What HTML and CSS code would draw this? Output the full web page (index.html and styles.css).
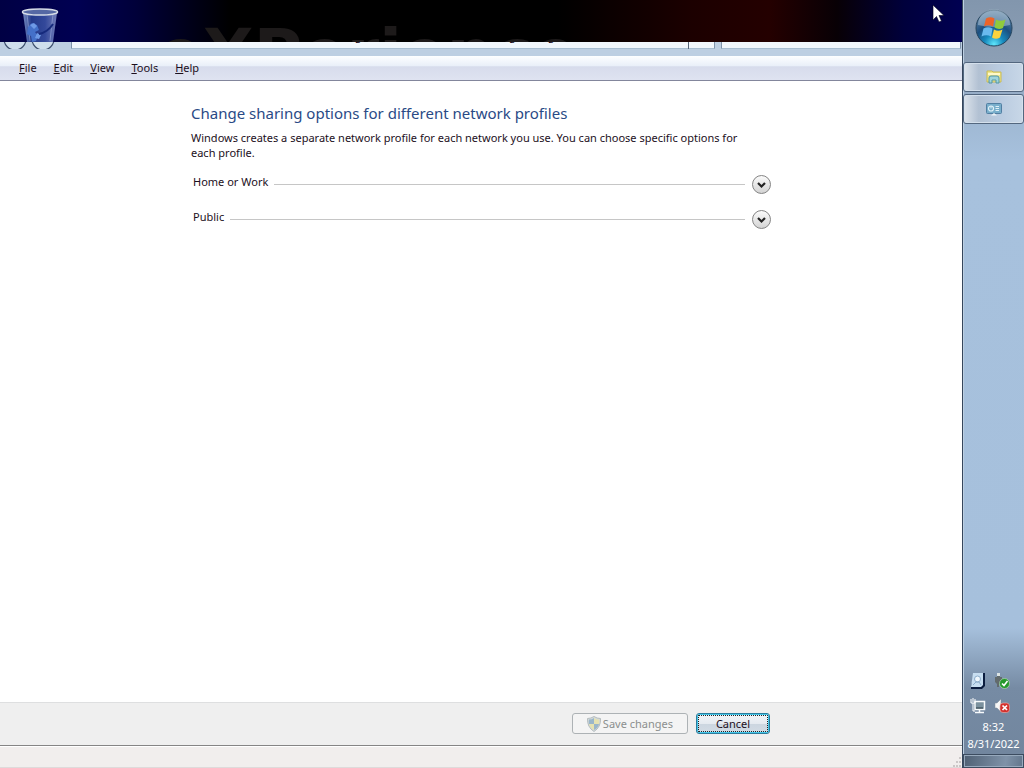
FILE: index.html
```html
<!DOCTYPE html>
<html lang="en">
<head>
  <meta charset="UTF-8">
  <meta name="viewport" content="width=device-width, initial-scale=1.0">
  <title>Advanced sharing settings</title>
  <link rel="stylesheet" href="styles.css">
</head>
<body>
  <div class="screen">
    <!-- Desktop strip -->
    <div class="desktop">
      <span class="wallpaper-text">eXPerience</span>
      <svg class="recycle-bin" width="40" height="42" viewBox="0 0 40 42">
        <defs>
          <linearGradient id="bin" x1="0" y1="0" x2="1" y2="0">
            <stop offset="0" stop-color="#8ba3d6"/>
            <stop offset=".25" stop-color="#2a4496"/>
            <stop offset=".65" stop-color="#3c55a8"/>
            <stop offset="1" stop-color="#8794cc"/>
          </linearGradient>
        </defs>
        <path d="M3 13 L7 42 H33 L37 13 Z" fill="url(#bin)" opacity=".85"/>
        <path d="M7 14 L10 41 M33 14 L30 41" stroke="#a9b8e2" stroke-width="1" opacity=".5"/>
        <path d="M8 27 l4 -4 5 2 2 5 -4 2 3 4 -2 5 -4 1 -1 -6 -4 -2 Z" fill="#4470c9"/>
        <path d="M10 25 l4 -2 3 3 -3 3 Z M17 33 l4 2 -2 4 -4 -1 Z" fill="#6f9ae6"/>
        <path d="M19 34 Q28 32 33 24" fill="none" stroke="#162a7c" stroke-width="2"/>
        <ellipse cx="20" cy="12" rx="17.500" ry="3" fill="#5568a4" stroke="#d5dbe6" stroke-width="1.500"/>
      </svg>
      <svg class="cursor" width="13" height="20" viewBox="0 0 13 20">
        <path d="M1 1 V16 L4.500 12.500 L7 18 L9.500 17 L7 11.500 H12 Z" fill="#fff" stroke="#00001c" stroke-width=".6"/>
      </svg>
    </div>

    <!-- Window -->
    <main class="window">
      <div class="address-row">
        <svg class="nav-buttons" width="58" height="24" viewBox="0 0 58 24">
          <g fill="#cfdfed" stroke="#3e506e" stroke-width="1.200">
            <circle cx="15" cy="14" r="11"/>
            <circle cx="43" cy="14" r="11"/>
          </g>
        </svg>
        <div class="address">
          <svg width="10" height="16" viewBox="0 0 10 16"><circle cx="5" cy="11" r="4" fill="#30479c"/></svg>
          <span>Network and Internet</span>
          <span>Network and Sharing Center</span>
          <span>Advanced sharing settings</span>
          <div class="address-drop">
            <svg width="8" height="16" viewBox="0 0 8 16"><path d="M1 9 L4 13 L7 9" fill="none" stroke="#333c4c" stroke-width="1.500"/></svg>
          </div>
        </div>
        <div class="search">
          <svg width="10" height="16" viewBox="0 0 10 16"><path d="M2 14 L7 10" stroke="#35488c" stroke-width="2"/></svg>
        </div>
      </div>

      <nav class="menu-bar">
        <button><u>F</u>ile</button>
        <button><u>E</u>dit</button>
        <button><u>V</u>iew</button>
        <button><u>T</u>ools</button>
        <button><u>H</u>elp</button>
      </nav>

      <section class="content">
        <div class="column">
          <h1>Change sharing options for different network profiles</h1>
          <p>Windows creates a separate network profile for each network you use. You can choose specific options for each profile.</p>
          <button class="profile">
            <span class="profile-name">Home or Work</span>
            <span class="rule"></span>
            <svg width="20" height="20" viewBox="0 0 20 20">
              <circle cx="10.500" cy="10.500" r="9" fill="url(#knob)" stroke="#858585"/>
              <path d="M7 9 L10.500 12.500 L14 9" fill="none" stroke="#222" stroke-width="2.200"/>
            </svg>
          </button>
          <button class="profile">
            <span class="profile-name">Public</span>
            <span class="rule"></span>
            <svg width="20" height="20" viewBox="0 0 20 20">
              <defs>
                <linearGradient id="knob" x1="0" y1="0" x2="0" y2="1">
                  <stop offset="0" stop-color="#fcfcfc"/>
                  <stop offset="1" stop-color="#d2d2d2"/>
                </linearGradient>
              </defs>
              <circle cx="10.500" cy="10.500" r="9" fill="url(#knob)" stroke="#858585"/>
              <path d="M7 9 L10.500 12.500 L14 9" fill="none" stroke="#222" stroke-width="2.200"/>
            </svg>
          </button>
        </div>
      </section>

      <footer class="actions">
        <div class="column">
          <button class="btn" disabled>
            <svg width="14" height="16" viewBox="0 0 14 16">
              <path d="M7 0.500 Q10 2.500 13.500 2.500 Q14 11 7 15.500 Q0 11 0.500 2.500 Q4 2.500 7 0.500 Z" fill="#d5dbdc" stroke="#b4bcbe"/>
              <path d="M7 2 V8 H2 Q1.500 6 2 3.500 Q5 3.500 7 2 Z M7 8 H12 Q11 12 7 14 Z" fill="#9ab6ca"/>
              <path d="M7 2 Q9 3.500 12 3.500 Q12.500 6 12 8 H7 Z M2 8 H7 V14 Q3 12 2 8 Z" fill="#e5e2b2"/>
            </svg>
            Save changes
          </button>
          <button class="btn btn-default">Cancel</button>
        </div>
      </footer>

      <div class="status-bar">
        <svg width="10" height="10" viewBox="0 0 10 10" fill="#cbc7c7">
          <path d="M7 0h2v2h-2z M4 4h2v2h-2z M7 4h2v2h-2z M1 8h2v2h-2z M4 8h2v2h-2z M7 8h2v2h-2z"/>
        </svg>
      </div>
    </main>
  </div>

  <!-- Taskbar -->
  <aside class="taskbar">
    <button class="start" aria-label="Start">
      <svg width="40" height="40" viewBox="0 0 40 40">
        <defs>
          <radialGradient id="orb" cx=".5" cy=".95" r=".9">
            <stop offset="0" stop-color="#5fe6fb"/>
            <stop offset=".3" stop-color="#1689bd"/>
            <stop offset=".6" stop-color="#1c4f80"/>
            <stop offset="1" stop-color="#6688a6"/>
          </radialGradient>
        </defs>
        <circle cx="20" cy="20" r="18" fill="url(#orb)" stroke="#27465f"/>
        <path d="M4 17 A16 16 0 0 1 36 17 Q20 21 4 17 Z" fill="#c4d5e3" opacity=".45"/>
        <path d="M12 10.500 Q16 8 20.500 10.500 L19 18.500 Q14.500 16 10 18.500 Z" fill="#ed6327"/>
        <path d="M22 11.500 Q26.500 14 31.500 11.500 L29 20 Q24.500 22 20.500 19.500 Z" fill="#8fca3c"/>
        <path d="M9.500 20.500 Q14 18 18.500 20.500 L17 28.500 Q12.500 26 7.500 28.500 Z" fill="#69b9ee"/>
        <path d="M20 21.500 Q24 24 28.500 21.500 L26 29.500 Q22 32 18 29.500 Z" fill="#fcd23c"/>
      </svg>
    </button>
    <button class="task" aria-label="Windows Explorer">
      <svg width="16" height="16" viewBox="0 0 16 16">
        <path d="M1 2 H6 L7 3 H15 V13 H1 Z" fill="#efe68b" stroke="#c9bb55"/>
        <path d="M2 5 H14" stroke="#fff9c8" stroke-width="2"/>
        <path d="M3 14 V9 Q3 7 5 7 H11 Q13 7 13 9 V14 H10 V11 H6 V14 Z" fill="#9fd5dc" stroke="#5296a5"/>
      </svg>
    </button>
    <button class="task" aria-label="Control Panel">
      <svg width="16" height="16" viewBox="0 0 16 16">
        <rect x="0.500" y="2.500" width="15" height="10" rx="1" fill="#78aecb" stroke="#527fa2"/>
        <circle cx="5" cy="7.500" r="2.500" fill="none" stroke="#e0f1f8" stroke-width="1.200"/>
        <path d="M5 7.500 V5 M9.500 5.500 H13 M9.500 7.500 H13 M9.500 9.500 H13" stroke="#e0f1f8"/>
        <path d="M5 14.500 L8 12 L11 14.500 Z" fill="#edf3f7"/>
      </svg>
    </button>

    <div class="tray">
      <div class="tray-icons">
        <svg width="16" height="16" viewBox="0 0 16 16">
          <path d="M4 0 H15 V13 L12 16 H1 V14 Z" fill="#0b1d3f"/>
          <path d="M3 0 H13 V12 L11 14 H1 Z" fill="#c7def1"/>
          <circle cx="7.500" cy="6" r="3" fill="#eff7fd" stroke="#8cadcb"/>
          <path d="M3 12 L6 9 H9 L11 12" fill="none" stroke="#8cadcb"/>
        </svg>
        <svg width="16" height="16" viewBox="0 0 16 16">
          <path d="M3 0 H6 V4 H8 V8 Q8 11 5 11 V14 H3 V11 L1 9 V4 H3 Z" fill="#626b6d"/>
          <path d="M3 0 H6 V3 H3 Z" fill="#dce4e4"/>
          <circle cx="10.500" cy="10.500" r="5" fill="#24992c" stroke="#c3e3bc" stroke-width=".6"/>
          <path d="M8 10.500 L10 12.500 L13.500 8" fill="none" stroke="#fff" stroke-width="1.600"/>
        </svg>
        <svg width="16" height="16" viewBox="0 0 16 16">
          <path d="M5 3.500 H14.500 V11.500 H5 Z" fill="#7b919e" stroke="#f7fafc" stroke-width="1.500"/>
          <path d="M5 14.500 H14 M9.500 12 V14" stroke="#f7fafc" stroke-width="1.500"/>
          <path d="M1 1 V5 H5 V1 M3 0 V4 M3 5 V13 H5" fill="none" stroke="#fff"/>
          <path d="M6 10 H13" stroke="#2c3c47" stroke-width="1"/>
        </svg>
        <svg width="16" height="16" viewBox="0 0 16 16">
          <path d="M1 5 H3 L7 1 V14 L3 10 H1 Z" fill="#f7f7f7" stroke="#7f8b95" stroke-width=".5"/>
          <rect x="6" y="5" width="9.500" height="9.500" rx="3" fill="#d3302d" stroke="#efb3ad" stroke-width=".6"/>
          <path d="M8.500 7.500 L13 12 M13 7.500 L8.500 12" stroke="#fff" stroke-width="1.700"/>
        </svg>
      </div>
      <div class="clock">
        <time>8:32</time>
        <time>8/31/2022</time>
      </div>
      <button class="show-desktop" aria-label="Show desktop"></button>
    </div>
  </aside>
</body>
</html>
```
FILE: styles.css
```css
* {
  box-sizing: border-box;
}
body {
  margin: 0;
  min-height: 100vh;
  display: flex;
  font-family: "Noto Sans", "Open Sans", sans-serif;
  font-size: 11px;
  line-height: 15px;
  color: #1c0f1c;
}
button {
  font: inherit;
  color: inherit;
  border: none;
  background: none;
  padding: 0;
}
svg {
  flex: none;
  display: block;
}
.screen {
  flex: 1;
  min-width: 0;
  display: flex;
  flex-direction: column;
}

/* Desktop */
.desktop {
  position: relative;
  height: 42px;
  flex: none;
  overflow: hidden;
  background: linear-gradient(to right, #000044 0%, #000052 8%, #00003a 14%, #000 24%, #000 58%, #1c0000 72%, #240000 80%, #080005 87%, #00003c 94%, #000052 100%);
}
.wallpaper-text {
  position: absolute;
  left: 158px;
  top: 14px;
  font: bold 66px/80px "DejaVu Sans", sans-serif;
  color: #1d1a1a;
}
.recycle-bin {
  position: absolute;
  left: 20px;
  top: 0;
}
.cursor {
  position: absolute;
  right: 17px;
  top: 4px;
}

/* Window */
.window {
  flex: 1;
  display: flex;
  flex-direction: column;
  background: #fff;
}
.address-row {
  height: 14px;
  flex: none;
  overflow: hidden;
  display: flex;
  align-items: flex-end;
  gap: 6px;
  padding: 0 1px 7px 0;
  background: #bdcfe2;
}
.nav-buttons {
  margin-right: 7px;
}
.address,
.search {
  height: 22px;
  display: flex;
  align-items: center;
  background: #f1f7fc;
  border: 1px solid #7e93aa;
  border-bottom-color: #a6bdd1;
}
.address {
  flex: 1;
  gap: 24px;
  padding: 0 0 6px 10px;
  white-space: nowrap;
}
.address-drop {
  width: 26px;
  height: 22px;
  margin: 0 0 -6px auto;
  display: flex;
  align-items: center;
  justify-content: center;
  padding-bottom: 6px;
  border-left: 1px solid #56657a;
}
.search {
  width: 25%;
  justify-content: flex-end;
  padding: 0 12px 6px 0;
}
.menu-bar {
  height: 25px;
  flex: none;
  display: flex;
  align-items: center;
  gap: 17px;
  padding: 0 0 2px 19px;
  background: linear-gradient(#fdfeff, #eaf0f9 40%, #d7dcec 45%, #dfe3f1);
  border-bottom: 1px solid #83869c;
}
.content {
  flex: 1;
  padding-top: 22px;
}
.column {
  width: 100%;
  max-width: 580px;
  margin: 0 auto;
}
h1 {
  margin: 0 0 7px;
  font-size: 15px;
  font-weight: normal;
  line-height: 20px;
  color: #2a4a86;
}
p {
  max-width: 565px;
  margin: 0 0 14px;
}
.profile {
  width: 100%;
  height: 20px;
  margin-bottom: 15px;
  padding-left: 2px;
  display: flex;
  align-items: center;
  gap: 6px;
}
.profile-name {
  align-self: flex-start;
}
.rule {
  flex: 1;
  height: 1px;
  background: #c6c6c6;
}
.actions {
  padding: 10px 0 11px;
  background: #efefef;
  border-top: 1px solid #dedfe0;
  border-bottom: 1px solid #858585;
}
.actions .column {
  display: flex;
  justify-content: flex-end;
  gap: 8px;
  padding-right: 1px;
}
.btn {
  height: 21px;
  min-width: 74px;
  padding: 0 14px;
  display: flex;
  align-items: center;
  justify-content: center;
  gap: 2px;
  border: 1px solid #707070;
  border-radius: 3px;
}
.btn:disabled {
  color: #8b8f8e;
  background: #f4f4f4;
  border-color: #adb2b5;
}
.btn-default {
  border-color: #2c7c9c;
  box-shadow: inset 0 0 0 1px #45c7ea;
  background: linear-gradient(#f3f6f9, #e5eaf0 50%, #ccd6e0 55%, #d3dce5);
  outline: 1px dotted #222;
  outline-offset: -3px;
}
.status-bar {
  height: 22px;
  display: flex;
  align-items: flex-end;
  justify-content: flex-end;
  background: #f1eeed;
  border-top: 1px solid #fff;
  border-bottom: 1px solid #dedada;
}

/* Taskbar */
.taskbar {
  width: 62px;
  flex: none;
  display: flex;
  flex-direction: column;
  background: linear-gradient(#8296ad 0, #8c9fb5 60px, #9db6d1 110px, #a7c1dd 160px, #a6c0dc calc(100% - 140px), #768ba4 calc(100% - 80px), #71859d 100%);
  border-left: 1px solid #35465c;
  box-shadow: inset 1px 0 #bdd0e2;
}
.start {
  height: 62px;
  padding-bottom: 6px;
  display: flex;
  align-items: center;
  justify-content: center;
}
.task {
  height: 30px;
  margin-bottom: 2px;
  display: flex;
  align-items: center;
  justify-content: center;
  border: 1px solid #53677f;
  border-radius: 3px;
  box-shadow: inset 0 0 0 1px #d4e0ec;
  background: linear-gradient(to right, #dce3eb, #b2c1d3 25%, #b9cbe0 60%, #c8d7e7);
}
.tray {
  margin-top: auto;
  color: #fff;
}
.tray-icons {
  display: grid;
  grid-template-columns: 16px 16px;
  gap: 9px 8px;
  justify-content: center;
  padding-right: 8px;
}
.clock {
  display: flex;
  flex-direction: column;
  align-items: center;
  gap: 2px;
  padding: 5px 0 3px;
}
.show-desktop {
  display: block;
  width: 100%;
  height: 14px;
  border: 1px solid #3c4c60;
  background: linear-gradient(100deg, #4f6074, #7f92a8 70%, #62758b);
  box-shadow: inset 0 0 0 1px #97a9bc;
}
```
